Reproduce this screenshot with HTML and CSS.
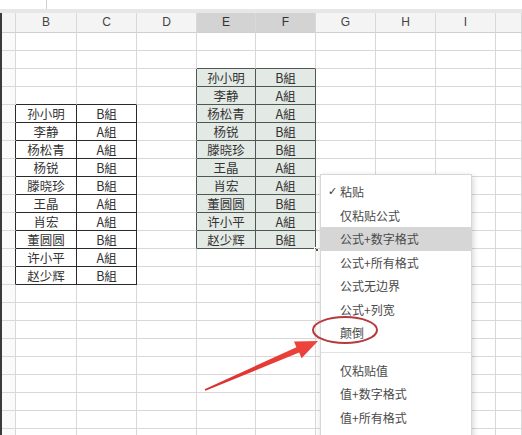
FILE: index.html
```html
<!DOCTYPE html>
<html lang="zh-CN">
<head>
    <meta charset="UTF-8">
    <title>选择性粘贴 - 颠倒</title>
    <link rel="stylesheet" href="styles.css">
</head>
<body>
    <div class="screen">
        <div class="formula-bar">
            <div class="name-box"></div>
        </div>
        <div class="ribbon-gap"></div>

        <div class="sheet" id="sheet"></div>

        <div class="paste-menu">
            <div class="menu-item checked"><span class="check">✓</span>粘贴</div>
            <div class="menu-item">仅粘贴公式</div>
            <div class="menu-item active">公式+数字格式</div>
            <div class="menu-item">公式+所有格式</div>
            <div class="menu-item">公式无边界</div>
            <div class="menu-item">公式+列宽</div>
            <div class="menu-item">颠倒</div>
            <div class="menu-sep"></div>
            <div class="menu-item">仅粘贴值</div>
            <div class="menu-item">值+数字格式</div>
            <div class="menu-item">值+所有格式</div>
        </div>

        <svg class="annotation" width="522" height="435" viewBox="0 0 522 435">
            <defs>
                <linearGradient id="arrowFill" x1="0" y1="1" x2="1" y2="0">
                    <stop offset="0" stop-color="#d9302c"/>
                    <stop offset="1" stop-color="#f0453f"/>
                </linearGradient>
            </defs>
            <ellipse cx="345" cy="330" rx="32" ry="13" fill="none" stroke="#b5393d" stroke-width="2"/>
            <polygon fill="url(#arrowFill)"
                points="204.6,389.2 296.4,347.2 294,341.4 318,341 301.6,358.2 299.2,352.6 205.4,390.8"/>
        </svg>
    </div>

    <script>
        // column letters, first one is the row header
        const cols = ['', 'B', 'C', 'D', 'E', 'F', 'G', 'H', 'I', 'J'];
        const names = ['孙小明', '李静', '杨松青', '杨锐', '滕晓珍', '王晶', '肖宏', '董圆圆', '许小平', '赵少辉'];
        const groups = ['B組', 'A組', 'A組', 'B組', 'B組', 'A組', 'A組', 'B組', 'A組', 'B組'];

        // original list and the copied (selected) list
        const source = { r0: 5, c0: 1 };
        const copied = { r0: 3, c0: 4 };

        function inBlock(r, c, b) {
            return r >= b.r0 && r < b.r0 + 10 && c >= b.c0 && c <= b.c0 + 1;
        }

        const sheet = document.getElementById('sheet');

        cols.forEach((letter, c) => {
            const head = document.createElement('div');
            head.className = 'col-head';
            if (c === 4 || c === 5) head.classList.add('picked');
            if (letter !== 'J') head.textContent = letter;
            sheet.appendChild(head);
        });

        for (let r = 1; r <= 23; r++) {
            for (let c = 0; c < cols.length; c++) {
                const cell = document.createElement('div');
                cell.className = c === 0 ? 'cell row-head' : 'cell';

                if (inBlock(r, c, source) || inBlock(r, c + 1, source)) cell.classList.add('dark-r');
                if (inBlock(r, c, source) || inBlock(r + 1, c, source)) cell.classList.add('dark-b');
                if (inBlock(r, c, copied) || inBlock(r, c + 1, copied)) cell.classList.add('sel-r');
                if (inBlock(r, c, copied) || inBlock(r + 1, c, copied)) cell.classList.add('sel-b');

                [source, copied].forEach(b => {
                    if (inBlock(r, c, b)) {
                        const i = r - b.r0;
                        cell.textContent = c === b.c0 ? names[i] : groups[i];
                        if (b === copied) cell.classList.add('sel');
                    }
                });

                // fill handle on the last selected cell
                if (r === copied.r0 + 9 && c === copied.c0 + 1) {
                    const handle = document.createElement('span');
                    handle.className = 'fill-handle';
                    cell.appendChild(handle);
                }

                sheet.appendChild(cell);
            }
        }
    </script>
</body>
</html>
```

FILE: styles.css
```css
:root {
    --grid-line: #d8d8d8;
    --dark-line: #2a2a2a;
    --sel-line: #4f5753;
    --sel-fill: #e3e9e4;
    --text: #333;
}

* {
    box-sizing: border-box;
    margin: 0;
    padding: 0;
}

body {
    background: #fff;
    font-family: "Noto Sans CJK SC", "Liberation Sans", sans-serif;
    color: var(--text);
}

.screen {
    position: relative;
    width: 522px;
    height: 435px;
    overflow: hidden;
    background: #fff;
}

.formula-bar {
    height: 9px;
    background: #fff;
}

.name-box {
    width: 47px;
    height: 9px;
    border-right: 1px solid #cfcfcf;
}

.ribbon-gap {
    height: 4px;
    background: #e7e7e7;
}

.sheet {
    display: grid;
    grid-template-columns: 14px 61px 60px 60px 59px 60px 60px 60px 60px 1fr;
    grid-template-rows: 20px;
    grid-auto-rows: 18px;
    border-left: 2px solid #3a3a3a;
}

.col-head {
    background: #f4f4f4;
    border-right: 1px solid var(--grid-line);
    border-bottom: 1px solid #cfcfcf;
    font-family: "Liberation Sans", sans-serif;
    font-size: 12px;
    color: #444;
    text-align: center;
    line-height: 19px;
}

.col-head.picked {
    background: #d3d3d3;
    color: #333;
}

.cell {
    position: relative;
    border-right: 1px solid var(--grid-line);
    border-bottom: 1px solid var(--grid-line);
    font-size: 12.5px;
    line-height: 17px;
    text-align: center;
    white-space: nowrap;
}

.row-head {
    background: #fafafa;
}

.cell.dark-r {
    border-right-color: var(--dark-line);
}

.cell.dark-b {
    border-bottom-color: var(--dark-line);
}

.cell.sel-r {
    border-right-color: var(--sel-line);
}

.cell.sel-b {
    border-bottom-color: var(--sel-line);
}

.cell.sel {
    background: var(--sel-fill);
}

.fill-handle {
    position: absolute;
    right: -4px;
    bottom: -4px;
    width: 5px;
    height: 5px;
    background: #4f5753;
    border: 1px solid #fff;
}

.paste-menu {
    position: absolute;
    left: 320px;
    top: 174px;
    width: 152px;
    height: 280px;
    padding-top: 5px;
    background: #fff;
    border: 1px solid #d6d6d6;
    box-shadow: 1px 2px 6px rgba(0, 0, 0, 0.18);
}

.menu-item {
    position: relative;
    height: 23.5px;
    padding-left: 19px;
    font-size: 12px;
    line-height: 23.5px;
    color: #4a4a4a;
}

.menu-item.active {
    background: #d6d6d6;
}

.check {
    position: absolute;
    left: 7px;
    top: 0;
    font-family: "DejaVu Sans", sans-serif;
    font-size: 11px;
    color: #333;
}

.menu-sep {
    height: 1px;
    margin: 7px 0 6px;
    background: #e2e2e2;
}

.annotation {
    position: absolute;
    left: 0;
    top: 0;
    pointer-events: none;
}
```
